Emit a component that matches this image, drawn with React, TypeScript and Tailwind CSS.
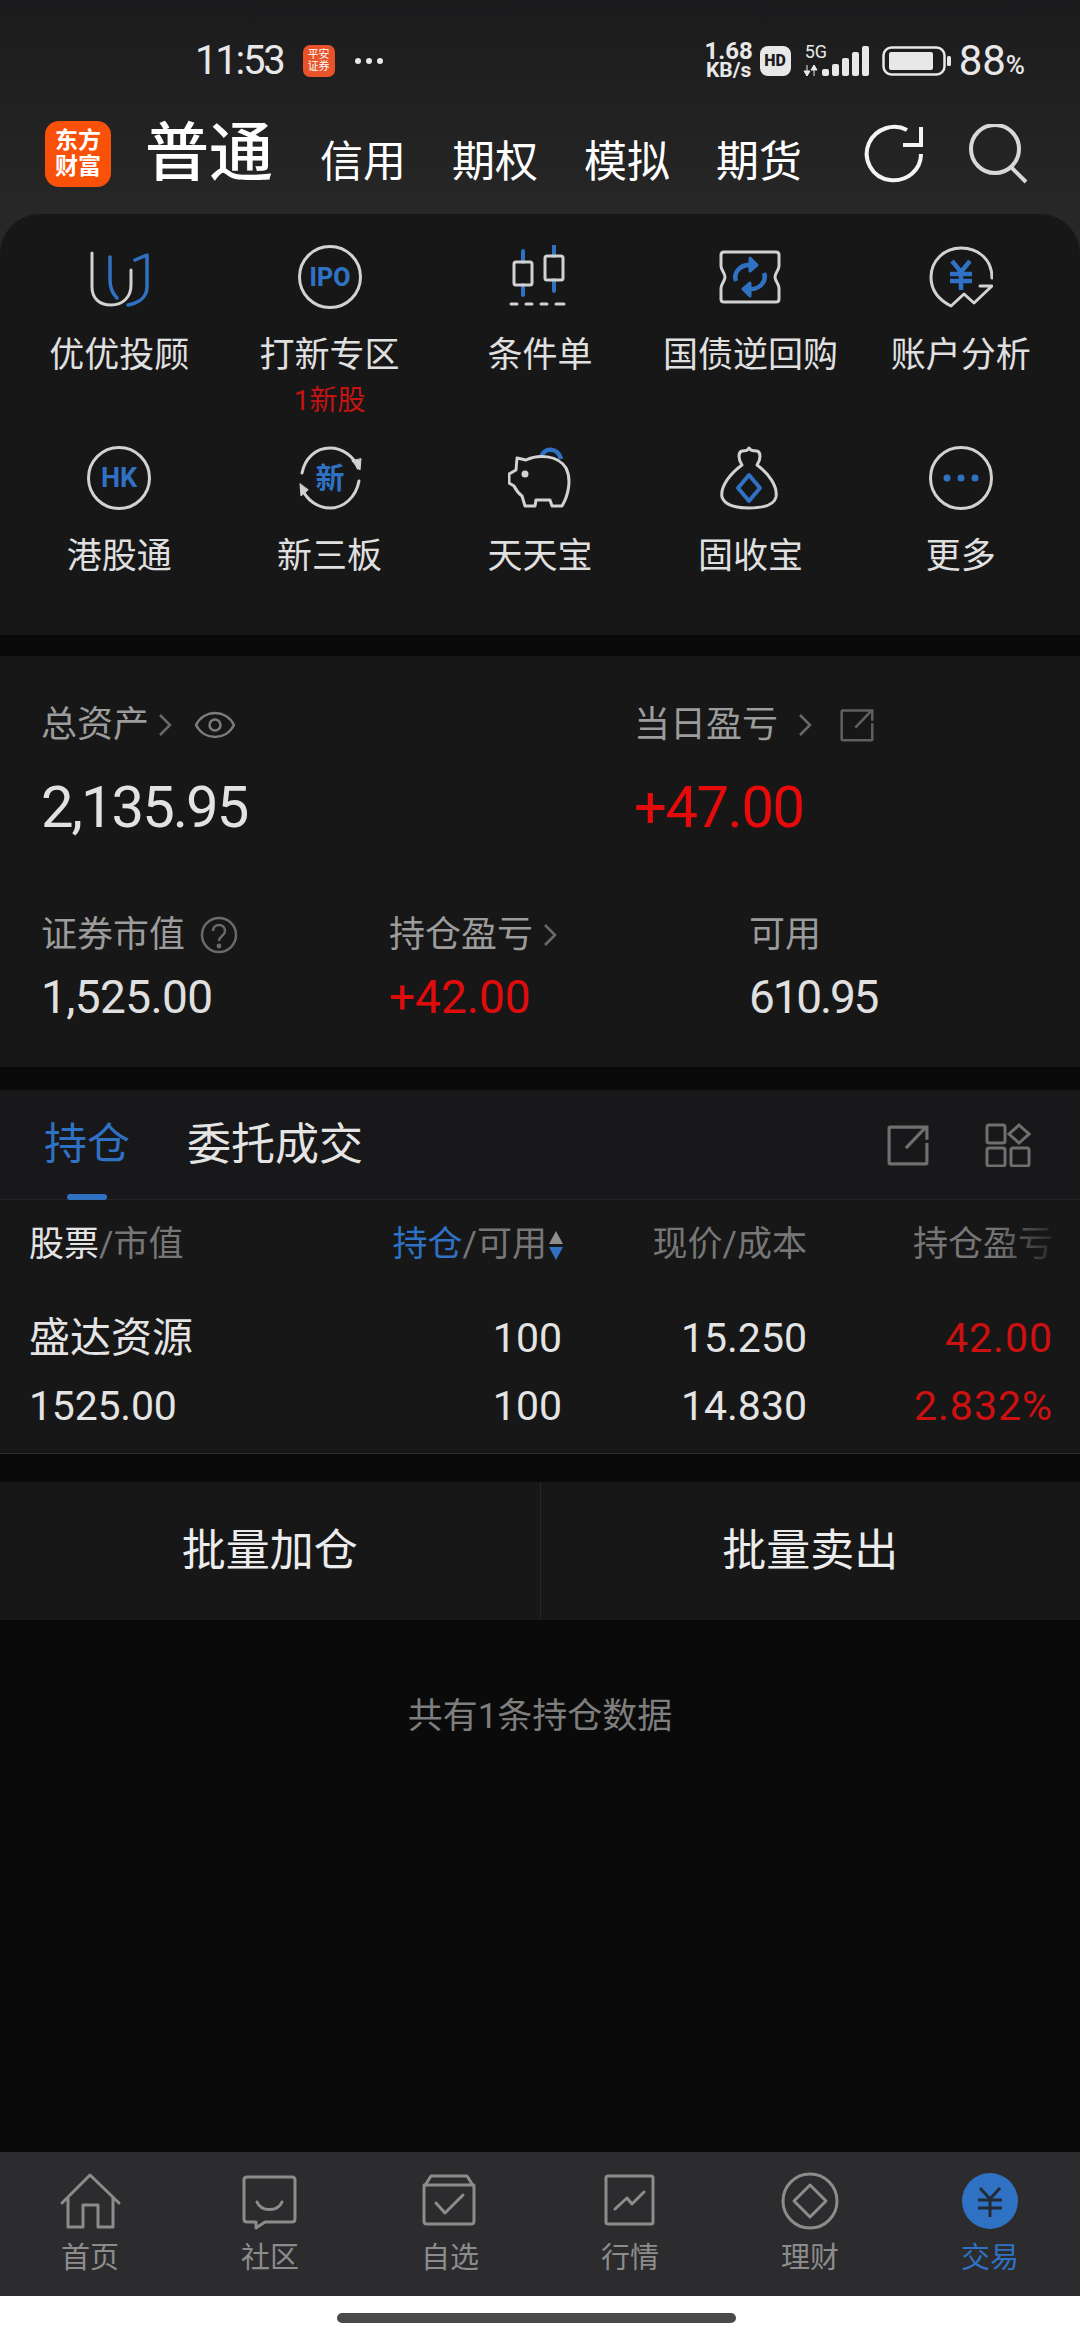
const BLUE = "#2f72c4";
const GREY = "#d2d2d2";

function Glyph({ children }: { children: React.ReactNode }) {
  return (
    <svg width="64" height="64" viewBox="0 0 64 64" fill="none" strokeLinecap="round" strokeLinejoin="round" strokeWidth="3">
      {children}
    </svg>
  );
}

const shortcutRows = [
  [
    {
      label: "优优投顾",
      sub: "",
      icon: (
        <Glyph>
          <path d="M5 8V42C5 53 12 60 24 60C36 60 44 52 44 40V25" stroke={GREY} />
          <path d="M23 12V35C23 44 26 49 30 53" stroke={BLUE} strokeWidth="3.5" />
          <path d="M41 60C52 58 60 52 60 42V10L48 15" stroke={BLUE} strokeWidth="3.5" />
        </Glyph>
      ),
    },
    {
      label: "打新专区",
      sub: "1新股",
      icon: (
        <Glyph>
          <circle cx="32" cy="32" r="30.5" stroke={GREY} />
          <text x="32" y="41" textAnchor="middle" fill={BLUE} fontSize="25" fontWeight="800" fontFamily="Roboto, sans-serif">IPO</text>
        </Glyph>
      ),
    },
    {
      label: "条件单",
      sub: "",
      icon: (
        <Glyph>
          <path d="M15 6V17M15 40V50M46 1V11M46 35V46" stroke={BLUE} strokeWidth="4" />
          <rect x="6" y="17" width="18" height="23" rx="2" stroke={GREY} />
          <rect x="37" y="11" width="18" height="24" rx="2" stroke={GREY} />
          <path d="M3 59H9M18 59H24M33 59H39M48 59H56" stroke={GREY} />
        </Glyph>
      ),
    },
    {
      label: "国债逆回购",
      sub: "",
      icon: (
        <Glyph>
          <path d="M6 7H58C60 7 61 8 61 10V21C61 25 57 28 57 32C57 36 61 39 61 43V54C61 56 60 57 58 57H6C4 57 3 56 3 54V43C3 39 7 36 7 32C7 28 3 25 3 21V10C3 8 4 7 6 7Z" stroke={GREY} />
          <path d="M18 36C15 28 22 19 33 20H38" stroke={BLUE} strokeWidth="4.5" strokeLinecap="butt" />
          <path d="M32 13L39 20L32 26Z" fill={BLUE} stroke={BLUE} />
          <path d="M46 28C49 36 42 45 31 44H26" stroke={BLUE} strokeWidth="4.5" strokeLinecap="butt" />
          <path d="M32 38L25 44L32 51Z" fill={BLUE} stroke={BLUE} />
        </Glyph>
      ),
    },
    {
      label: "账户分析",
      sub: "",
      icon: (
        <Glyph>
          <path d="M63 33C63 15 50 3 32 3C15 3 2 16 2 32C2 45 10 55 22 61L35 49L45 58L63 41H51" stroke={GREY} />
          <path d="M23 16L32 27L41 16M21 29H43M21 36H43M32 27V45" stroke={BLUE} strokeWidth="4.5" strokeLinecap="butt" strokeLinejoin="miter" />
        </Glyph>
      ),
    },
  ],
  [
    {
      label: "港股通",
      sub: "",
      icon: (
        <Glyph>
          <circle cx="32" cy="32" r="30.5" stroke={GREY} />
          <text x="32" y="41" textAnchor="middle" fill={BLUE} fontSize="27" fontWeight="700" fontFamily="Roboto, sans-serif">HK</text>
        </Glyph>
      ),
    },
    {
      label: "新三板",
      sub: "",
      icon: (
        <Glyph>
          <path d="M4 27C7 12 18 2 32 2C44 2 56 10 60 22" stroke={GREY} />
          <path d="M54 15L62 24L63 13Z" fill={GREY} stroke={GREY} strokeWidth="1" />
          <path d="M61 35C58 51 46 62 32 62C20 62 8 54 4 42" stroke={GREY} />
          <path d="M2 38L3 50L10 44Z" fill={GREY} stroke={GREY} strokeWidth="1" />
          <text x="32" y="43" textAnchor="middle" fill={BLUE} fontSize="29" fontWeight="700" fontFamily="'Noto Sans CJK SC', sans-serif">新</text>
        </Glyph>
      ),
    },
    {
      label: "天天宝",
      sub: "",
      icon: (
        <Glyph>
          <path d="M33 11C36 1 50 1 53 13" stroke={BLUE} strokeWidth="4.5" strokeLinecap="butt" />
          <path d="M9 12L18 14C30 8 50 9 58 22C64 34 60 50 54 60H44L42 54H28L27 60H17L14 50C10 47 8 44 6 40L1 37V28L8 24Z" stroke={GREY} />
          <circle cx="17" cy="28" r="3.5" fill={GREY} />
        </Glyph>
      ),
    },
    {
      label: "固收宝",
      sub: "",
      icon: (
        <Glyph>
          <path d="M24 19C20 13 20 6 24 5C27 4 29 6 31 2C33 6 36 4 39 5C43 6 43 13 39 19C50 27 60 40 58 51C56 60 44 62 31 62C18 62 7 60 4 51C2 40 13 27 24 19Z" stroke={GREY} />
          <path d="M31 29L42 42L31 55L20 42Z" stroke={BLUE} strokeWidth="4" />
        </Glyph>
      ),
    },
    {
      label: "更多",
      sub: "",
      icon: (
        <Glyph>
          <circle cx="32" cy="32" r="30.5" stroke={GREY} />
          <circle cx="18" cy="32" r="3.5" fill={BLUE} />
          <circle cx="32" cy="32" r="3.5" fill={BLUE} />
          <circle cx="46" cy="32" r="3.5" fill={BLUE} />
        </Glyph>
      ),
    },
  ],
];

const NAV_GREY = "#8c8c8c";

function NavGlyph({ children }: { children: React.ReactNode }) {
  return (
    <svg width="64" height="60" viewBox="0 0 64 60" fill="none" stroke={NAV_GREY} strokeWidth="3" strokeLinejoin="round" strokeLinecap="round">
      {children}
    </svg>
  );
}

const navItems = [
  {
    label: "首页",
    icon: (
      <NavGlyph>
        <path d="M4 33L32 5L61 33M10 27V57H25V35H40V57H55V27" />
      </NavGlyph>
    ),
  },
  {
    label: "社区",
    icon: (
      <NavGlyph>
        <path d="M9 7H54C56 7 57 8 57 10V49C57 51 56 52 54 52H27L18 58L18 52H9C7 52 6 51 6 49V10C6 8 7 7 9 7Z" />
        <path d="M19 32C23 42 40 42 44 32" />
      </NavGlyph>
    ),
  },
  {
    label: "自选",
    icon: (
      <NavGlyph>
        <path d="M6 17L13 6H49L56 17V51C56 53 55 54 53 54H9C7 54 6 53 6 51Z" />
        <path d="M6 15H56M18 33L27 43L45 25" />
      </NavGlyph>
    ),
  },
  {
    label: "行情",
    icon: (
      <NavGlyph>
        <rect x="8" y="6" width="47" height="48" rx="2" />
        <path d="M17 39L29 28L34 34L46 22" />
      </NavGlyph>
    ),
  },
  {
    label: "理财",
    icon: (
      <NavGlyph>
        <circle cx="32" cy="31" r="27" />
        <path d="M32 15L48 31L32 47L16 31Z" />
      </NavGlyph>
    ),
  },
  {
    label: "交易",
    active: true,
    icon: (
      <svg width="64" height="60" viewBox="0 0 64 60" fill="none" stroke="#232a33" strokeWidth="3">
        <circle cx="32" cy="31" r="28" fill={BLUE} stroke="none" />
        <path d="M22 18L32 29L42 18M20 30H44M20 38H44M32 29V47" />
      </svg>
    ),
  },
];

function Chevron({ className }: { className: string }) {
  return (
    <svg className={className} width="14" height="24" viewBox="0 0 14 24" fill="none" stroke="#6a6a6a" strokeWidth="2.5">
      <path d="M2 2L12 12L2 22" />
    </svg>
  );
}

function ShareIcon({ size, color }: { size: number; color: string }) {
  return (
    <svg width={size} height={size} viewBox="0 0 40 40" fill="none" stroke={color} strokeWidth="3">
      <path d="M27 3H3C2 3 2 3 2 4V37C2 38 2 38 3 38H37C38 38 38 38 38 37V18" />
      <path d="M18 23L37 3M26 3H38V15" />
    </svg>
  );
}

export default function App() {
  return (
    <div className="flex h-[2340px] w-[1080px] flex-col overflow-hidden bg-[#0a0a0a] font-['Roboto','Noto_Sans_CJK_SC',sans-serif] text-[#e4e4e4]">
      {/* status bar + account tabs */}
      <div className="h-[214px] shrink-0 bg-linear-to-b from-[#1b1b1d] to-[#272727]">
        <div className="flex h-[99px] items-center justify-between pt-[22px] pr-[55px] pl-[195px]">
          <div className="flex items-center">
            <span className="text-[40px] leading-none tracking-[-2.2px] text-[#e8e8e8]">11:53</span>
            <div className="ml-[19px] flex h-[32px] w-[32px] items-center justify-center rounded-[7px] bg-[#e8532a] text-center text-[11px] leading-[12px] text-white">
              平安
              <br />
              证券
            </div>
            <div className="ml-[20px] flex gap-[5px]">
              <span className="h-[6px] w-[6px] rounded-full bg-[#e8e8e8]" />
              <span className="h-[6px] w-[6px] rounded-full bg-[#e8e8e8]" />
              <span className="h-[6px] w-[6px] rounded-full bg-[#e8e8e8]" />
            </div>
          </div>
          <div className="flex items-center">
            <div className="w-[54px] text-center text-[24px] leading-[18px] font-bold text-[#e8e8e8]">
              1.68
              <br />
              <span className="text-[21px]">KB/s</span>
            </div>
            <div className="ml-[4px] flex h-[30px] w-[31px] items-center justify-center rounded-[8px] bg-[#e8e8e8] text-[16px] font-black text-[#1c1c1e]">
              HD
            </div>
            <div className="relative ml-[11px] h-[34px] w-[68px]">
              <svg width="68" height="34" viewBox="0 0 68 34" fill="#e8e8e8">
                <path d="M5 21V32M2 27L5 32L8 27Z M12 21V32M9 26L12 21L15 26Z" stroke="#e8e8e8" strokeWidth="1" />
                <rect x="20" y="25" width="7" height="7" rx="2" />
                <rect x="30" y="20" width="7" height="12" rx="2" />
                <rect x="40" y="14" width="7" height="18" rx="2" />
                <rect x="50" y="8" width="7" height="24" rx="2" />
                <rect x="60" y="2" width="7" height="30" rx="2" />
              </svg>
              <span className="absolute -top-[3px] left-[3px] text-[18px] leading-[22px] text-[#e8e8e8]">5G</span>
            </div>
            <svg className="ml-[12px]" width="70" height="30" viewBox="0 0 70 30" fill="none">
              <rect x="1.5" y="1.5" width="61" height="27" rx="8" stroke="#e8e8e8" strokeWidth="2.5" />
              <rect x="7" y="6" width="44" height="18" rx="2" fill="#e8e8e8" />
              <rect x="65" y="10" width="4" height="10" rx="1.5" fill="#e8e8e8" />
            </svg>
            <span className="ml-[7px] text-[42px] leading-none text-[#e8e8e8]">88</span>
            <span className="mt-[9px] text-[26px] leading-none font-medium text-[#e8e8e8]">%</span>
          </div>
        </div>
        <div className="flex h-[109px] items-center pr-[52px] pl-[45px]">
          <div className="flex h-[66px] w-[66px] items-center justify-center rounded-[14px] bg-[#f9500a] text-center text-[23px] leading-[26px] font-bold text-white">
            东方
            <br />
            财富
          </div>
          <span className="ml-[34px] text-[64px] leading-none font-medium text-white">普通</span>
          <div className="mt-[18px] ml-[47px] flex gap-[46px] text-[43px] leading-none text-white">
            <span>信用</span>
            <span>期权</span>
            <span>模拟</span>
            <span>期货</span>
          </div>
          <div className="ml-auto flex items-center gap-[44px]">
            <svg width="60" height="60" viewBox="0 0 60 60" fill="none" stroke="#f4f4f4" strokeWidth="4">
              <path d="M43 6C30 -1 12 4 5 19C-2 35 8 54 26 56C43 58 57 46 57 30" />
              <path d="M57 3V21H39" />
            </svg>
            <svg width="60" height="60" viewBox="0 0 60 60" fill="none" stroke="#d8d8d8" strokeWidth="4">
              <circle cx="27" cy="25" r="24" />
              <path d="M43 43L58 58" />
            </svg>
          </div>
        </div>
      </div>

      {/* shortcuts */}
      <div className="shrink-0 bg-[#272727]">
        <div className="h-[421px] rounded-t-[40px] bg-[#171717] px-[14px] pt-[31px]">
          <div className="flex flex-col">
            {shortcutRows.map((row, i) => (
              <div key={i} className={i === 0 ? "grid h-[201px] grid-cols-5" : "grid grid-cols-5"}>
                {row.map((item) => (
                  <div key={item.label} className="flex flex-col items-center">
                    {item.icon}
                    <span className="mt-[28px] text-[35px] leading-[38px] text-[#e0e0e0]">{item.label}</span>
                    {item.sub && <span className="mt-[10px] text-[28px] leading-[32px] text-[#c41414]">{item.sub}</span>}
                  </div>
                ))}
              </div>
            ))}
          </div>
        </div>
      </div>

      {/* assets */}
      <div className="mt-[21px] h-[411px] shrink-0 bg-[#171717] pl-[41px]">
        <div className="flex h-[89px] items-end">
          <div className="flex w-[593px] items-center">
            <span className="text-[36px] leading-[40px] text-[#9c9c9c]">总资产</span>
            <Chevron className="ml-[9px]" />
            <svg className="ml-[22px]" width="42" height="30" viewBox="0 0 42 30" fill="none" stroke="#7c7c7c" strokeWidth="2.5">
              <path d="M2 15C10 -1 32 -1 40 15C32 31 10 31 2 15Z" />
              <circle cx="21" cy="15" r="5.5" />
            </svg>
          </div>
          <div className="flex items-center">
            <span className="text-[36px] leading-[40px] text-[#9c9c9c]">当日盈亏</span>
            <Chevron className="ml-[20px]" />
            <div className="ml-[28px]">
              <ShareIcon size={34} color="#5f5f5f" />
            </div>
          </div>
        </div>
        <div className="mt-[32px] flex h-[60px] items-center">
          <span className="w-[593px] text-[58px] leading-none tracking-[-2px] text-[#e2e2e2]">2,135.95</span>
          <span className="text-[58px] leading-none tracking-[-1.5px] text-[#e60a0a]">+47.00</span>
        </div>
        <div className="mt-[78px] grid grid-cols-[348px_360px_1fr]">
          <div className="flex items-center">
            <span className="text-[36px] leading-[40px] text-[#9c9c9c]">证券市值</span>
            <svg className="ml-[15px]" width="38" height="38" viewBox="0 0 38 38" fill="none" stroke="#6a6a6a" strokeWidth="2.5">
              <circle cx="19" cy="19" r="17" />
              <path d="M13 15C13 7 25 7 25 15C25 20 19 20 19 25" />
              <circle cx="19" cy="30" r="1.2" />
            </svg>
          </div>
          <div className="flex items-center">
            <span className="text-[36px] leading-[40px] text-[#9c9c9c]">持仓盈亏</span>
            <Chevron className="ml-[10px]" />
          </div>
          <span className="text-[36px] leading-[40px] text-[#9c9c9c]">可用</span>
        </div>
        <div className="mt-[17px] grid grid-cols-[348px_360px_1fr] text-[46px] leading-[50px]">
          <span className="tracking-[-0.6px] text-[#e0e0e0]">1,525.00</span>
          <span className="text-[#e00c0c]">+42.00</span>
          <span className="tracking-[-2.2px] text-[#e0e0e0]">610.95</span>
        </div>
      </div>

      {/* holdings */}
      <div className="mt-[23px] shrink-0 bg-[#18181a]">
        <div className="flex h-[110px] items-center border-b border-[#242426] pr-[49px] pl-[44px]">
          <div className="relative">
            <span className="text-[43px] leading-none text-[#2f72c4]">持仓</span>
            <span className="absolute top-[71px] left-[23px] h-[6px] w-[40px] rounded-full bg-[#2f72c4]" />
          </div>
          <span className="ml-[57px] text-[44px] leading-none text-[#e4e4e4]">委托成交</span>
          <div className="ml-auto flex items-center gap-[56px]">
            <ShareIcon size={42} color="#6f6f6f" />
            <svg width="46" height="44" viewBox="0 0 46 44" fill="none" stroke="#6f6f6f" strokeWidth="3">
              <rect x="2" y="2" width="18" height="18" rx="2" />
              <path d="M34 2L44 11L34 20L24 11Z" />
              <rect x="2" y="25" width="18" height="18" rx="2" />
              <rect x="26" y="25" width="18" height="18" rx="2" />
            </svg>
          </div>
        </div>
        <div className="relative h-[253px] bg-[#171717] pr-[27px] pl-[29px]">
          <div className="grid h-[87px] grid-cols-[332px_201px_245px_246px] items-center pt-[2px] text-[35px] leading-[40px] text-[#767676]">
            <div>
              <span className="text-[#e4e4e4]">股票</span>/市值
            </div>
            <div className="flex items-center justify-end">
              <span className="text-[#2f72c4]">持仓</span>/可用
              <svg className="-mr-[2px] ml-[1px]" width="16" height="34" viewBox="0 0 16 34">
                <path d="M8 3L15 16H1Z" fill="#8f8f8f" />
                <path d="M8 32L15 19H1Z" fill="#2f72c4" />
              </svg>
            </div>
            <div className="text-right">现价/成本</div>
            <div className="text-right">持仓盈亏</div>
          </div>
          <div className="grid grid-cols-[332px_201px_245px_246px] pt-[17px] text-[41px] leading-[68px]">
            <span className="text-[#e4e4e4]">盛达资源</span>
            <span className="text-right text-[#e4e4e4]">100</span>
            <span className="text-right text-[#e4e4e4]">15.250</span>
            <span className="text-right tracking-[1px] text-[#cf1010]">42.00</span>
            <span className="tracking-[-0.2px] text-[#e4e4e4]">1525.00</span>
            <span className="text-right text-[#e4e4e4]">100</span>
            <span className="text-right text-[#e4e4e4]">14.830</span>
            <span className="text-right tracking-[1px] text-[#cf1010]">2.832%</span>
          </div>
          <div className="absolute top-[0px] right-[14px] h-[86px] w-[70px] bg-linear-to-r from-transparent to-[#171717]" />
        </div>
        <div className="h-px bg-[#2c2c2c]" />
      </div>

      {/* bulk actions */}
      <div className="mt-[28px] flex h-[138px] shrink-0 items-center bg-[#171718] text-[44px] text-[#ececec]">
        <div className="flex h-full flex-1 items-center justify-center">批量加仓</div>
        <div className="h-full w-px bg-[#262626]" />
        <div className="flex h-full flex-1 items-center justify-center">批量卖出</div>
      </div>

      <div className="flex-1 bg-[#0a0a0a] pt-[77px] text-center text-[35px] leading-[40px] text-[#7e7e7e]">共有1条持仓数据</div>

      {/* bottom nav */}
      <div className="grid h-[144px] shrink-0 grid-cols-6 bg-[#2c2c2e] pt-[18px]">
        {navItems.map((item) => (
          <div key={item.label} className="flex flex-col items-center">
            {item.icon}
            <span className={item.active ? "mt-[12px] text-[29px] leading-[32px] text-[#2f72c4]" : "mt-[12px] text-[29px] leading-[32px] text-[#8c8c8c]"}>
              {item.label}
            </span>
          </div>
        ))}
      </div>
      <div className="flex h-[44px] shrink-0 justify-center bg-white pt-[17px] pr-[7px]">
        <div className="h-[10px] w-[399px] rounded-full bg-[#4a4a4a]" />
      </div>
    </div>
  );
}
